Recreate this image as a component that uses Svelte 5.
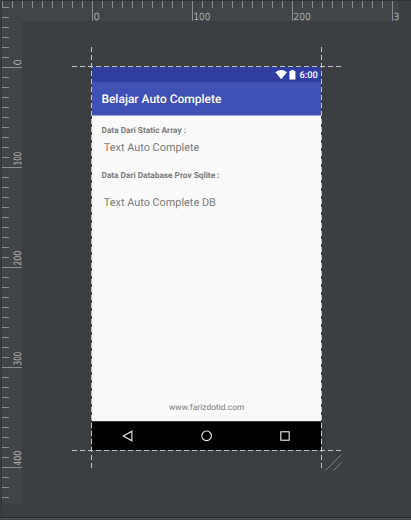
<script>
  const topTicks = Array.from({ length: 40 }, (_, i) => 2 + i * 10);
  const sideTicks = Array.from({ length: 50 }, (_, i) => 7 + i * 10);
  const topMajor = [{ at: 92, label: '0', w: 6.4 }, { at: 192, label: '100', w: 17 }, { at: 292, label: '200', w: 17.5 }, { at: 392, label: '3', w: 6 }];
  const sideMajor = [{ at: 67, label: '0', w: 6.4 }, { at: 167, label: '100', w: 14 }, { at: 267, label: '200', w: 14.5 }, { at: 367, label: '300', w: 14 }, { at: 467, label: '400', w: 14.5 }];
</script>

<main class="editor">
  <div class="stage">
    <section class="phone">
      <div class="status">
        <svg width="22" height="12" viewBox="0 0 22 12" fill="#fff">
          <path d="M.4 3.2Q6.2-1.2 12 3.2L6.2 10.2Z" />
          <path d="M14.4 2h1.5V1h3v1h1.5v8.6h-6Z" />
        </svg>
        <svg class="t" width="19" height="12"><text x="0.6" y="9.3" textLength="18.3" lengthAdjust="spacingAndGlyphs">6:00</text></svg>
      </div>
      <header><svg class="t" width="130" height="20"><text x="0.4" y="14" textLength="120" lengthAdjust="spacingAndGlyphs">Belajar Auto Complete</text></svg></header>
      <div class="content">
        <svg class="t label" width="200" height="12"><text x="0.5" y="8.8" textLength="84.5" lengthAdjust="spacingAndGlyphs">Data Dari Static Array :</text></svg>
        <svg class="t field one" width="200" height="16"><text x="0.8" y="12" textLength="95.5" lengthAdjust="spacingAndGlyphs">Text Auto Complete</text></svg>
        <svg class="t label two" width="200" height="12"><text x="0.5" y="8.8" textLength="118" lengthAdjust="spacingAndGlyphs">Data Dari Database Prov Sqlite :</text></svg>
        <svg class="t field three" width="200" height="16"><text x="0.8" y="12" textLength="112" lengthAdjust="spacingAndGlyphs">Text Auto Complete DB</text></svg>
        <svg class="t site" width="76" height="12"><text x="0" y="8.5" textLength="75.5" lengthAdjust="spacingAndGlyphs">www.farizdotid.com</text></svg>
      </div>
      <nav>
        <svg width="12" height="12" viewBox="0 0 12 12"><path d="M9.9 1.2v9.6L1.4 6Z" /></svg>
        <svg width="12" height="12" viewBox="0 0 12 12"><circle cx="5.6" cy="5.8" r="4.8" /></svg>
        <svg width="12" height="12" viewBox="0 0 12 12"><rect x="1.8" y="1.8" width="8.4" height="8.4" /></svg>
      </nav>
    </section>
  </div>

  <svg class="overlay" width="411" height="520" viewBox="0 0 411 520">
    <path d="M2 1H399V21H22V503.5H2Z" fill="#424548" />
    <path d="M0 .5H411M1.5 0V517" stroke="#303234" />
    <g fill="#8b8d8e">
      {#each topTicks as x}<rect {x} y="1" width="1" height="7" />{/each}
      {#each sideTicks as y}<rect x="2" {y} width="7" height="1" />{/each}
      {#each topMajor as m}<rect x={m.at} y="1" width="1" height="20" />{/each}
      {#each sideMajor as m}<rect x="2" y={m.at} width="20" height="1" />{/each}
    </g>
    <g class="ruler-text">
      {#each topMajor as m}<text x={m.at + 1.4} y="19.7" textLength={m.w} lengthAdjust="spacingAndGlyphs">{m.label}</text>{/each}
      {#each sideMajor as m}<text transform="translate(20.8 {m.at - 1.5}) rotate(-90)" textLength={m.w} lengthAdjust="spacingAndGlyphs">{m.label}</text>{/each}
    </g>
    <path d="M72 66.5H341M72 450.5H341M91.5 47V468M321.5 47V468" stroke="#bfc0c1" stroke-dasharray="5 3" />
    <path d="M325.5 470.5L341.5 454.5M333.5 470.5L341.5 462.5" stroke="#929597" stroke-width=".8" />
    <rect y="517" width="411" height="1" fill="#292b2d" />
    <rect y="518" width="411" height="1" fill="#555555" />
    <rect y="519" width="411" height="1" fill="#434343" />
  </svg>
</main>

<style>
  .editor { position: relative; width: 411px; height: 520px; overflow: hidden; background: #3c3f41; font-family: Roboto, sans-serif; }
  .stage { padding: 67px 90px 0 92px; }
  .phone { display: flex; flex-direction: column; width: 229px; height: 383px; background: #fafafa; }
  svg { display: block; flex: none; }
  .t { overflow: visible; text-rendering: geometricPrecision; }
  .status { height: 15px; background: #303f9f; display: flex; align-items: center; justify-content: flex-end; gap: 2px; padding-right: 3px; box-sizing: border-box; }
  .status .t { font-size: 9.3px; font-weight: 500; fill: #fff; }
  header { height: 34px; box-sizing: border-box; padding: 7px 9px; background: #3f51b5; border-bottom: 1px solid #9fa8da; }
  header .t { font-size: 12px; font-weight: 500; fill: #fff; }
  .content { flex: 1; display: flex; flex-direction: column; padding: 8px 9px; }
  .label { font-size: 8.4px; font-weight: 700; fill: #7c7c7c; }
  .field { font-size: 11px; fill: #7a7a7a; margin-left: 2px; }
  .one { margin-top: 3px; }
  .two { margin-top: 14px; }
  .three { margin-top: 13px; }
  .site { margin: auto auto 0; font-size: 8.4px; fill: #7a7a7a; }
  nav { height: 29px; box-sizing: border-box; border-top: 1px solid #333; background: #000; display: flex; align-items: center; justify-content: space-between; padding: 0 30px; fill: none; stroke: #eee; stroke-width: 1.1; }
  .overlay { position: absolute; inset: 0; }
  .ruler-text { font: 200 9.8px "DejaVu Sans", sans-serif; fill: #c9cbcc; stroke: #c9cbcc; stroke-width: .15; text-rendering: geometricPrecision; }
</style>
